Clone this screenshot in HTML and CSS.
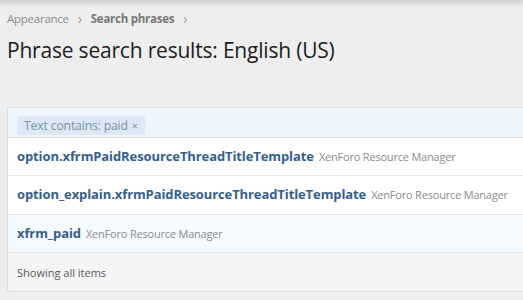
FILE: index.html
```html
<!DOCTYPE html>
<html>
<head>
    <title>Phrase search results</title>
    <link rel="stylesheet" href="styles.css">
</head>
<body>
    <div class="topShadow"></div>
    <div class="page">
        <ul class="crumbs">
            <li><a href="#">Appearance</a></li>
            <li class="sep">&rsaquo;</li>
            <li><a href="#" class="strong">Search phrases</a></li>
            <li class="sep">&rsaquo;</li>
        </ul>
        <h1 class="title">Phrase search results: English (US)</h1>

        <div class="block">
            <div class="filters">
                <span class="chip">Text contains: paid <span class="x">&times;</span></span>
            </div>
            <div class="row">
                <a href="#" class="name">option.xfrmPaidResourceThreadTitleTemplate</a>
                <span class="addon">XenForo Resource Manager</span>
            </div>
            <div class="row">
                <a href="#" class="name">option_explain.xfrmPaidResourceThreadTitleTemplate</a>
                <span class="addon">XenForo Resource Manager</span>
            </div>
            <div class="row hover">
                <a href="#" class="name">xfrm_paid</a>
                <span class="addon">XenForo Resource Manager</span>
            </div>
            <div class="footer">Showing all items</div>
        </div>
    </div>
</body>
</html>
```

FILE: styles.css
```css
body {
    margin: 0;
    background: #eeeeee;
    font-family: "Open Sans", "Noto Sans", sans-serif;
    color: #141414;
    overflow: hidden;
}
.topShadow {
    height: 0;
    box-shadow: 0 0 6px 3px rgba(0, 0, 0, 0.18);
}
.page {
    padding: 10px 0 0 7px;
}
.crumbs {
    list-style: none;
    margin: 0;
    padding: 0;
    display: flex;
    gap: 9px;
    font-size: 11.5px;
    line-height: 18px;
    letter-spacing: -0.25px;
}
.crumbs a {
    color: #8c8c8c;
    text-decoration: none;
}
.crumbs a.strong {
    font-weight: bold;
    color: #777;
}
.crumbs .sep {
    color: #999;
    font-size: 14px;
}
.title {
    margin: 8px 0 0;
    font-size: 21px;
    font-weight: normal;
    line-height: 28px;
    letter-spacing: -0.2px;
    color: #1d1d1d;
}
.block {
    margin-top: 43px;
    background: #fff;
    border: 1px solid #dcdcdc;
    border-right: none;
    border-radius: 3px 0 0 3px;
    box-shadow: 0 1px 2px rgba(0, 0, 0, 0.06);
}
.filters {
    background: #edf6fd;
    border-bottom: 1px solid #d8d8d8;
    padding: 5px 9px;
    height: 19px;
}
.chip {
    display: inline-block;
    background: #dce8f3;
    color: #7a93a8;
    font-size: 12.3px;
    line-height: 19px;
    padding: 0 7px;
    border-radius: 3px;
    letter-spacing: -0.2px;
}
.chip .x {
    font-size: 11px;
    margin-left: 1px;
}
.row {
    display: flex;
    align-items: baseline;
    gap: 5px;
    height: 19.4px;
    border-bottom: 1px solid #e6e6e6;
    padding: 9px 9px;
    line-height: 19px;
}
.row.hover {
    background: #f5faff;
}
.name {
    color: #33608c;
    font-weight: bold;
    font-size: 13px;
    text-decoration: none;
    letter-spacing: -0.1px;
}
.addon {
    color: #8c8c8c;
    font-size: 11px;
    letter-spacing: -0.2px;
}
.footer {
    background: #f5f5f5;
    color: #555;
    font-size: 11px;
    padding: 11px 9px 9px;
    height: 18px;
    line-height: 18px;
    border-radius: 0 0 0 3px;
}
```
